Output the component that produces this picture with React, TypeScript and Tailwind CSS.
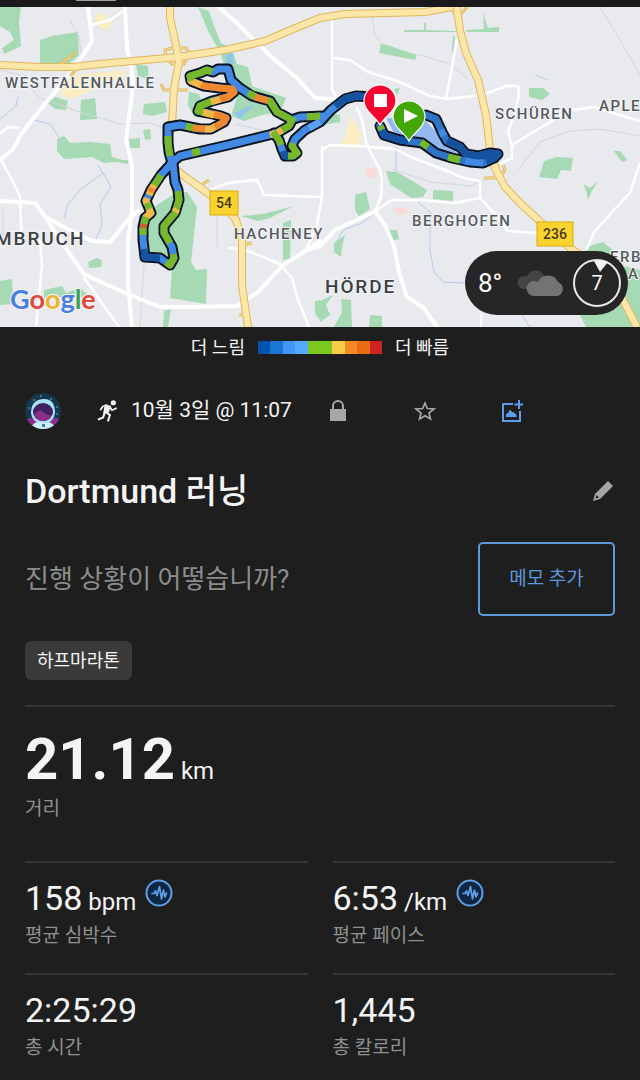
const BLUE = "#4189e2";
const STEEL = "#2f74c4";
const NAVY = "#1553a0";
const SKY = "#5ba3f0";
const GREEN = "#76b82a";
const YELLOW = "#f0b848";
const ORANGE = "#f0862e";
const RED = "#e05a20";

const legend = [
  "bg-[#0552b0]",
  "bg-[#1976d2]",
  "bg-[#4296f7]",
  "bg-[#56a9fd]",
  "bg-[#7ac820]",
  "bg-[#7ac820]",
  "bg-[#f8cc46]",
  "bg-[#f68a23]",
  "bg-[#ec6c10]",
  "bg-[#cf2222]",
];

const parks = [
  "M0 7H21L19 22 21 46 4 54 2 48 14 40 10 32 0 26Z",
  "M40 40 52 36 78 32 79 55 70 63H40Z",
  "M198 7 209 11 214 26 221 43 232 49 237 64 248 67 252 86 286 98 280 112 262 115 244 121 231 116 238 94 226 70 219 50 209 33Z",
  "M136 64 148 66 149 80 138 76Z",
  "M47 102 56 97 68 101 66 110 55 109Z",
  "M81 100 95 98 97 119 80 120Z",
  "M144 104 165 102 167 112 152 116 143 114Z",
  "M143 130 150 129 151 139 145 140Z",
  "M129 139 140 138V148H130Z",
  "M57 139 64 136 70 143 90 142 110 144 112 157 126 161 104 163 92 157 64 159 57 151Z",
  "M189 92 199 94 207 118 194 117 188 105Z",
  "M100 160H128V164L116 162Z",
  "M144 215 160 203 176 193 187 192 197 207 194 234 191 262 196 270 207 269 206 304 170 298 172 268 148 252Z",
  "M241 216 263 214 294 206 270 218 258 221Z",
  "M283 223 291 220 290 259 283 260Z",
  "M88 262 97 258 102 260 101 267 89 268Z",
  "M0 281 12 279 13 304 0 305Z",
  "M44 290 62 286 66 293 80 288 90 297H44Z",
  "M164 311 171 309 168 327H163Z",
  "M315 301 320 300V320L315 314Z",
  "M381 43 417 55 415 60 379 53Z",
  "M424 23H426V30L456 31V32H404V30H424Z",
  "M466 30 484 29 483 13 488 28 499 27V32H467Z",
  "M453 35 455 37 453 54 452 50Z",
  "M529 88 543 88 550 94 542 100 529 97Z",
  "M544 161 557 157 573 158 571 171 561 170 557 179 539 177Z",
  "M614 151 620 151 627 160 622 162Z",
  "M386 171 397 172 414 182 427 190 423 197 411 198 390 184Z",
  "M433 190 453 191V201L433 199Z",
  "M355 195 366 192 370 209 359 216 355 210Z",
  "M390 230 397 230 399 239 391 241Z",
  "M334 243 345 235 342 247 341 257 334 252Z",
  "M320 301 333 295 326 305 330 315 320 322Z",
  "M341 299 351 300 352 327H334L342 312Z",
  "M370 315 382 316V327H369Z",
  "M583 184 590 188 598 181 592 191 588 200 586 190Z",
  "M587 247 603 242 614 251 607 262 640 270V327H586L578 311Z",
  "M320 111 340 115 340 122 322 125Z",
  "M394 89 400 88 397 95Z",
];

const mainStreets = [
  "M88 7 91 32 92 41 80 60 64 81 40 110 22 133 13 149 0 160",
  "M125 7 127 50 131 63 133 85 130 110 126 140 132 165 132 210 128 240 128 285 132 327",
  "M213 2 236 22 255 41 275 60 297 78 315 98 330 99 345 97",
  "M0 201 35 203 44 215 62 243 84 274 103 283 130 295 160 307 190 307 237 306 258 292 283 265 307 250 320 241",
  "M43 215 60 225 92 241 110 242 128 220 138 211",
  "M374 212 335 230 320 246 307 250",
  "M375 211 385 225 394 246 399 272 407 297 424 308 437 327",
];

const streets = [
  "M0 133 9 127 18 128M0 158 12 180 20 196 22 245",
  "M92 25 110 20 125 10",
  "M84 278 119 327M40 240 42 265 36 327",
  "M332 19V90L337 97",
  "M333 58 350 60 368 72 397 81 430 96 447 99 474 96 488 93 506 86H518L519 95 514 115 508 132 512 146",
  "M457 40 446 99M357 108 362 120 366 142 372 155 380 170 382 180 381 197 375 211",
  "M322 150 330 145 360 146 395 149 413 158 440 168 464 178 480 181V198",
  "M375 211 392 200 420 200 454 203 480 198 496 215 508 231 538 233",
  "M322 147V196L317 225 305 252",
  "M500 164 512 158 512 145 540 128 570 110 595 107 613 113 640 121",
  "M640 163 630 193 614 210 594 232 587 249",
  "M209 190 228 183 257 180 264 195 322 197",
  "M230 248 248 251 280 264 292 278 298 300 309 327",
  "M481 315V327",
];

const minorRoads = [
  "M0 70 20 75 40 98 80 112 120 124 150 123 168 130",
  "M70 20 79 37 84 70M372 17 375 36 383 45M417 54 450 64 468 79",
  "M600 7 620 40 640 75M518 170 540 142 570 131 600 129 640 136",
  "M3 210V240M217 214V247M145 250 140 327M235 124 270 132",
  "M392 169 430 182 470 186 505 170",
];

const water = [
  "M18 97 16 106 0 119M30 119 50 124 59 137 63 146",
  "M98 165 103 173 80 190 68 204 64 218M103 173 111 187 100 204 102 224 96 239",
  "M375 213 362 223 343 230 336 243M418 202 430 212V250L434 272 443 282 464 283",
  "M535 75 548 80M521 314 530 327M396 147V170",
];

const highways = [
  "M0 65 40 67 72 67 100 64 178 57 225 50 265 41 298 27 320 18 345 14 425 12 452 7",
  "M170 2 170 18 176 45 179 62 174 88 172 125",
  "M456 2 460 30 466 53 478 80 486 115 490 150 495 168 505 187 520 203 545 226 569 247 600 270 622 298 637 327",
  "M170 165 184 176 205 191 223 204 236 220 242 240 242 285 248 327",
];

const ramps = [
  "M58 66 76 52M66 66 76 70 70 76M165 50 172 48H186L190 54 184 64 172 64 166 58Z",
  "M161 84 164 90H188M452 10 458 18 467 7",
  "M484 178 500 178 505 170 503 165M493 166H500M477 75 484 94M198 187 209 180M244 245 252 243M239 315H250",
];

const outline = [
  "M172 163 169 152 168 142 168 127 180 125 190 127 200 129 211 129 224 122 226 118 221 116 208 113 198 111 200 106 212 101 228 97 234 92 232 89 220 88 204 86 191 81 190 76 200 73 207 70 213 72 218 69 228 69 231 80 240 88 252 96 270 101 277 112 292 120 289 126 277 133 228 145 180 156 171 163",
  "M274 133 279 140 282 149 285 156 293 156 297 153 292 146 295 139 305 130 320 122 331 110 345 99 356 96 374 97",
  "M291 120 300 117 324 116",
  "M172 163 161 175 151 190 146 201 151 213 145 218 143 227 143 240 145 257 160 258 170 265 174 258 172 247 164 233 164 226 175 213 179 200 178 190 175 182 173 163",
];

const eastLoop =
  "M380 126 384 135 400 140 422 143 436 153 452 158 470 162 483 163 494 158 498 154 490 153 478 156 466 154 460 147 447 141 443 134 436 119 426 115";

const route: [string, string][] = [
  [GREEN, "M170 156 168 142 168 136"],
  [GREEN, "M186 126 194 128"],
  [ORANGE, "M193 128 206 129"],
  [YELLOW, "M205 129 211 129 216 126"],
  [ORANGE, "M215 127 224 122 226 118 221 116 213 114"],
  [YELLOW, "M214 115 202 112"],
  [GREEN, "M203 112 198 111 200 106 212 101"],
  [YELLOW, "M211 102 221 99"],
  [ORANGE, "M220 99 228 97 234 92 232 89 220 88 204 86 199 84"],
  [YELLOW, "M201 85 191 81 190 79"],
  [GREEN, "M191 81 190 76 200 73 207 70 212 72"],
  [GREEN, "M248 93 256 97"],
  [ORANGE, "M255 97 269 101"],
  [GREEN, "M268 101 270 101 277 112 292 120 289 126 280 131"],
  [YELLOW, "M282 130 277 133 270 135"],
  [GREEN, "M273 132 279 140 281 145"],
  [GREEN, "M192 153 200 151"],
  [NAVY, "M283 151 285 156 289 156"],
  [GREEN, "M288 156 293 156 297 153 292 146 293 143"],
  [GREEN, "M307 117 320 116"],
  [SKY, "M309 128 320 122"],
  [NAVY, "M335 106 345 99 356 96 374 97"],
  [GREEN, "M161 175 154 186"],
  [YELLOW, "M154 185 149 195"],
  [ORANGE, "M152 188 150 192"],
  [YELLOW, "M147 198 146 201 147 204"],
  [GREEN, "M147 203 150 210"],
  [YELLOW, "M149 209 151 213 145 218"],
  [GREEN, "M146 217 144 224"],
  [RED, "M144 224 143 228"],
  [GREEN, "M143 228V235"],
  [NAVY, "M144 249 145 257 160 258"],
  [GREEN, "M166 262 170 265 174 258 173 254"],
  [GREEN, "M170 243 164 233 164 226 175 213 179 200 178 191"],
  [YELLOW, "M177 209 175 212"],
  [GREEN, "M380 126 382 130"],
  [NAVY, "M382 130 384 135 400 140 408 141"],
  [GREEN, "M421 142 428 147"],
  [GREEN, "M448 157 460 160"],
  [BLUE, "M465 161 483 163"],
  [NAVY, "M486 161 494 158 498 154 490 153 478 156 466 154 460 147 447 141"],
  [BLUE, "M441 130 444 136"],
];

const mapLabels = [
  { text: "WESTFALENHALLE", x: 5, y: 88 },
  { text: "SCHÜREN", x: 495, y: 119 },
  { text: "APLE", x: 599, y: 111 },
  { text: "HACHENEY", x: 234, y: 239 },
  { text: "BERGHOFEN", x: 412, y: 226 },
  { text: "ERB", x: 610, y: 262 },
  { text: "A", x: 628, y: 279 },
];

function RouteMap() {
  return (
    <svg
      viewBox="0 7 640 320"
      className="block w-full bg-[#e8eaed]"
      fill="none"
      role="img"
      aria-label="Dortmund"
    >
      <g fill="#a5dab5">
        {parks.map((d) => (
          <path key={d} d={d} />
        ))}
      </g>
      <g fill="#fbeec3">
        <path d="M94 18 101 12 108 19 114 22 106 31 98 25Z" />
        <path d="M67 76 125 70V76L72 99 60 94Z" />
        <path d="M350 114 356 125 362 135 358 148 339 145 347 133Z" />
      </g>
      <path d="M225 56 232 51 234 64 227 65ZM234 113 255 104 240 119Z" fill="#90c6ec" />
      <path d="M386 118 425 120 442 138 458 154 430 145 396 137Z" fill="#94b8f0" />
      <g fill="#f9dcd8">
        <ellipse cx="371" cy="173" rx="6" ry="5" />
        <ellipse cx="401" cy="211" rx="7" ry="4" />
      </g>
      <g stroke="#d3d6db" strokeWidth="1">
        {minorRoads.map((d) => (
          <path key={d} d={d} />
        ))}
      </g>
      <g stroke="#b5cbf0" strokeWidth="1">
        {water.map((d) => (
          <path key={d} d={d} />
        ))}
      </g>
      <g stroke="#ffffff" strokeLinejoin="round" strokeLinecap="round">
        {streets.map((d) => (
          <path key={d} d={d} strokeWidth="2.500" />
        ))}
        {mainStreets.map((d) => (
          <path key={d} d={d} strokeWidth="4" />
        ))}
      </g>
      <g strokeLinejoin="round">
        {ramps.map((d) => (
          <path key={d} d={d} stroke="#dfb75c" strokeWidth="3" />
        ))}
        {highways.map((d) => (
          <path key={d} d={d} stroke="#dfb75c" strokeWidth="8" />
        ))}
        {ramps.map((d) => (
          <path key={d} d={d} stroke="#fbe3a0" strokeWidth="1" />
        ))}
        {highways.map((d) => (
          <path key={d} d={d} stroke="#fce7a8" strokeWidth="6" />
        ))}
      </g>

      <g strokeLinejoin="round" strokeLinecap="round">
        {[...outline, eastLoop].map((d) => (
          <path key={d} d={d} stroke="#0b1422" strokeWidth="11" />
        ))}
        {outline.map((d) => (
          <path key={d} d={d} stroke={BLUE} strokeWidth="7" />
        ))}
        <path d={eastLoop} stroke={STEEL} strokeWidth="7" />
      </g>
      <g strokeLinejoin="round">
        {route.map(([color, d]) => (
          <path key={d} d={d} stroke={color} strokeWidth="7" />
        ))}
      </g>

      <g stroke="#ffffff" strokeWidth="1.2">
        <path d="M380 125C376 117 364 111 364 101A16 16 0 0 1 396 101C396 111 384 117 380 125Z" fill="#f5052d" />
        <path d="M409 141C405 133 393 127 393 117A16 16 0 0 1 425 117C425 127 413 133 409 141Z" fill="#43a806" />
      </g>
      <path d="M374 94H387V107H374ZM404 109 418 116 404 123Z" fill="#ffffff" />

      <g fill="#fbd32f" stroke="#dba911">
        <rect x="210" y="191" width="28" height="24" />
        <rect x="537" y="222" width="36" height="24" />
      </g>
      <g fill="#4a3b14" className="font-['Roboto',sans-serif] text-[14px] font-medium" textAnchor="middle">
        <text x="224" y="208">54</text>
        <text x="555" y="239">236</text>
      </g>
      <g
        fill="#55595e"
        stroke="#f4f5f7"
        strokeWidth="2"
        paintOrder="stroke"
        className="font-['Roboto',sans-serif] text-[15px] font-medium tracking-widest"
      >
        {mapLabels.map((l) => (
          <text key={l.text} x={l.x} y={l.y}>
            {l.text}
          </text>
        ))}
      </g>
      <g
        fill="#3c4043"
        stroke="#f4f5f7"
        strokeWidth="2"
        paintOrder="stroke"
        className="font-['Roboto',sans-serif] text-[19px] font-medium tracking-widest"
      >
        <text x="-5" y="245">MBRUCH</text>
        <text x="325" y="293">HÖRDE</text>
      </g>
      <text
        x="10"
        y="309"
        stroke="#f4f5f7"
        strokeWidth="2"
        paintOrder="stroke"
        className="font-['Lato',sans-serif] text-[27px] font-bold"
      >
        <tspan fill="#4a7fe0">G</tspan>
        <tspan fill="#e0483e">o</tspan>
        <tspan fill="#eab531">o</tspan>
        <tspan fill="#4a7fe0">g</tspan>
        <tspan fill="#3f9f57">l</tspan>
        <tspan fill="#e0483e">e</tspan>
      </text>
    </svg>
  );
}

function WeatherBadge() {
  return (
    <div className="absolute right-3 bottom-3 flex h-16 w-[163px] items-center rounded-full bg-[#262626] pl-[13px] text-white">
      <span className="w-[39px] text-[26px] leading-8">8°</span>
      <svg viewBox="0 0 48 27" className="h-[27px] w-12">
        <path d="M7 19A6.500 6.500 0 0 1 7 6C8 6 9 6 10 6.500A9.500 9.500 0 0 1 27 5L24 19Z" fill="#444444" />
        <path d="M17 26A7.500 7.500 0 0 1 17 11Q19 11 21 12A11 11 0 0 1 41 12A7.500 7.500 0 0 1 41 26Z" fill="#737373" />
      </svg>
      <span className="relative ml-2 flex size-12 items-center justify-center rounded-full border-2 border-[#e8e8e8] text-[20px]">
        7
        <svg viewBox="0 0 14 12" className="absolute -top-px left-[19px] h-3 w-[14px]">
          <path d="M0 1Q7-1 14 2L6 12Z" fill="#f2f2f2" />
        </svg>
      </span>
    </div>
  );
}

function Avatar() {
  return (
    <svg viewBox="0 0 36 36" className="size-9 shrink-0">
      <clipPath id="avatar">
        <circle cx="18" cy="18" r="18" />
      </clipPath>
      <g clipPath="url(#avatar)">
        <path d="M0 0H36V36H0Z" fill="#15384f" />
        <path d="M0 27Q8 23 12 27H25Q30 23 36 27V36H0Z" fill="#8c2f93" />
        <path d="M5 36Q8 28 18 28T31 36Z" fill="#cdeefa" />
        <path d="M6 20Q6 7 18 6T30 20Q29 30 18 30T6 20Z" fill="#a9e2f5" />
        <ellipse cx="18" cy="19" rx="10" ry="9" fill="#40205f" />
        <path d="M9 22Q14 15 18 19T27 22Q24 28 18 28T9 22Z" fill="#8a2d88" />
        <path d="M17 31H20V34H17Z" fill="#3c7fa5" />
        <g fill="#8fdcf0">
          <circle cx="9" cy="7" r="0.700" />
          <circle cx="16" cy="3" r="0.700" />
          <circle cx="26" cy="6" r="0.700" />
          <circle cx="32" cy="14" r="0.700" />
          <circle cx="4" cy="15" r="0.700" />
          <circle cx="32" cy="21" r="0.700" />
        </g>
      </g>
    </svg>
  );
}

function RunnerIcon() {
  return (
    <svg viewBox="0 0 60 64" className="ml-9 h-[22px] w-[21px] shrink-0" fill="none" stroke="#f2f2f2" strokeLinejoin="round">
      <circle cx="47" cy="8" r="7.500" fill="#f2f2f2" stroke="none" />
      <path d="M24 15 38 19 32 34 20 38Z" fill="#f2f2f2" strokeWidth="5" />
      <path d="M26 16 16 19 9 30M37 20 43 30 57 23" strokeWidth="5" />
      <path d="M26 35 37 44 31 62M22 37 17 51 2 57" strokeWidth="6" />
    </svg>
  );
}

function PulseIcon() {
  return (
    <svg viewBox="0 0 28 28" className="size-7" fill="none" stroke="#5f9fe6" strokeLinejoin="round" strokeLinecap="round">
      <circle cx="14" cy="14" r="12.500" strokeWidth="2" fill="#0f2743" />
      <path d="M7 14.500H9L10.500 12 12 16.500 14.500 7.500 16.500 20 18.500 11 20 18 21.500 14" strokeWidth="1.700" />
    </svg>
  );
}

type StatProps = { value: string; unit?: string; label: string; pulse?: boolean };

function Stat({ value, unit, label, pulse }: StatProps) {
  return (
    <div className="flex h-28 flex-col-reverse justify-end border-t-2 border-[#363636] pt-4">
      <dt className="text-[19px] leading-7 text-[#909090]">{label}</dt>
      <dd className="flex h-[43px] items-start gap-[9px]">
        <span className="text-[34px] leading-[38px]">
          {value}
          {unit && <span className="text-[24px] leading-none"> {unit}</span>}
        </span>
        {pulse && <PulseIcon />}
      </dd>
    </div>
  );
}

const stats: StatProps[] = [
  { value: "158", unit: "bpm", label: "평균 심박수", pulse: true },
  { value: "6:53", unit: "/km", label: "평균 페이스", pulse: true },
  { value: "2:25:29", label: "총 시간" },
  { value: "1,445", label: "총 칼로리" },
];

export default function App() {
  return (
    <div className="min-h-screen bg-[#1e1e1e] font-['Roboto','Noto_Sans_CJK_KR',sans-serif] text-[#f4f4f4]">
      <div className="h-[7px] bg-[#1a1a1c] pl-[76px]">
        <div className="h-px w-10 bg-[#a0a0a0]"></div>
      </div>

      <div className="relative">
        <RouteMap />
        <WeatherBadge />
      </div>

      <div className="flex h-[41px] items-center justify-center gap-[13px] text-[18px]">
        <span>더 느림</span>
        <div className="flex w-[124px]">
          {legend.map((color, i) => (
            <div key={i} className={`h-[13px] flex-1 ${color}`}></div>
          ))}
        </div>
        <span>더 빠름</span>
      </div>

      <main className="px-[25px]">
        <header className="flex h-[86px] items-center">
          <Avatar />
          <RunnerIcon />
          <time className="ml-[13px] w-[163px] text-[21px] whitespace-nowrap">10월 3일 @ 11:07</time>
          <button type="button" aria-label="비공개" className="flex w-[87px] justify-center">
            <svg viewBox="0 0 18 22" className="h-[22px] w-[18px]" fill="none">
              <path d="M4 10V6A5 5 0 0 1 14 6V10" stroke="#a6a6a6" strokeWidth="2" />
              <path d="M1 9H17V21H1Z" fill="#a6a6a6" />
            </svg>
          </button>
          <button type="button" aria-label="즐겨찾기" className="flex w-[87px] justify-center">
            <svg viewBox="0 0 22 22" className="size-[22px]" fill="none" stroke="#a6a6a6" strokeWidth="1.700">
              <path d="M11 3 13.300 8.500 20 9 15 13 16.500 19 11 15.800 5.500 19 7 13 2 9 8.700 8.500Z" />
            </svg>
          </button>
          <button type="button" aria-label="사진 추가" className="flex w-[87px] justify-center">
            <svg viewBox="0 0 22 22" className="size-[22px]" fill="none" stroke="#5c9fe8" strokeWidth="2">
              <path d="M12 4H2V21H19V11" />
              <path d="M18 0V9M13.500 4.500H22" />
              <path d="M5 17V14L7 13 9 9.500 11 12 13 12.500 15.500 15V17Z" fill="#5c9fe8" stroke="none" />
            </svg>
          </button>
        </header>

        <div className="flex h-[74px] items-center justify-between">
          <h1 className="text-[34px] leading-10 font-medium">Dortmund 러닝</h1>
          <button type="button" aria-label="제목 편집">
            <svg viewBox="0 0 24 24" className="size-6" fill="#a6a6a6">
              <path d="M17 2 22 7 9 20 2 22 4 15ZM5.500 16 4.500 19.500 8 18.500Z" fillRule="evenodd" />
            </svg>
          </button>
        </div>

        <div className="mt-[14px] flex items-center justify-between">
          <p className="text-[26px] text-[#8c8c8c]">진행 상황이 어떻습니까?</p>
          <button
            type="button"
            className="h-[74px] w-[137px] rounded-[5px] border-2 border-[#5c98da] text-[19px] text-[#5c98da]"
          >
            메모 추가
          </button>
        </div>

        <span className="mt-[25px] flex h-[39px] w-fit items-center rounded-md bg-[#3a3a3a] px-3 text-[18px]">
          하프마라톤
        </span>

        <dl>
          <div className="mt-[25px] flex h-[156px] flex-col-reverse justify-end border-t-2 border-[#363636] pt-5">
            <dt className="mt-1 text-[19px] leading-7 text-[#909090]">거리</dt>
            <dd className="text-[58px] leading-16 font-bold">
              21.12
              <span className="text-[24px] leading-none font-normal"> km</span>
            </dd>
          </div>
          <div className="grid grid-cols-2 gap-x-[25px]">
            {stats.map((s) => (
              <Stat key={s.label} {...s} />
            ))}
          </div>
        </dl>
      </main>
    </div>
  );
}
